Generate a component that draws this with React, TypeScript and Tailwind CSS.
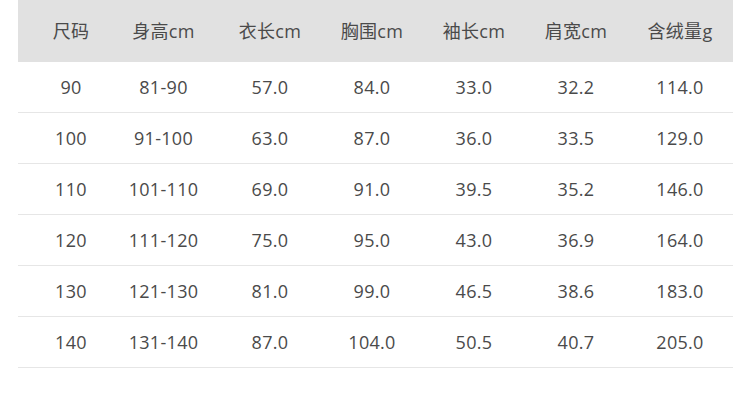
const HEADERS = ["尺码", "身高cm", "衣长cm", "胸围cm", "袖长cm", "肩宽cm", "含绒量g"];

const ROWS = [
  ["90", "81-90", "57.0", "84.0", "33.0", "32.2", "114.0"],
  ["100", "91-100", "63.0", "87.0", "36.0", "33.5", "129.0"],
  ["110", "101-110", "69.0", "91.0", "39.5", "35.2", "146.0"],
  ["120", "111-120", "75.0", "95.0", "43.0", "36.9", "164.0"],
  ["130", "121-130", "81.0", "99.0", "46.5", "38.6", "183.0"],
  ["140", "131-140", "87.0", "104.0", "50.5", "40.7", "205.0"],
];

// per-column nudges so text centres line up with the screenshot
const CELL = ["pl-[7px]", "pr-[7px]", "pl-[2px]", "", "", "", ""];

export default function App() {
  return (
    <div
      className="w-[750px] h-[409px] bg-white text-[#4a4a4a] text-[18px] tracking-[0.3px]"
      style={{ fontFamily: '"Open Sans", "Noto Sans CJK SC", sans-serif' }}
    >
      <div className="ml-[18px] w-[715px]">
        {/* ── Header ── */}
        <div className="grid grid-cols-[99px_100px_104px_102px_102px_102px_1fr] h-[62px] items-center bg-[#e1e1e1]">
          {HEADERS.map((h, i) => (
            <div key={h} className={`text-center ${CELL[i]}`}>{h}</div>
          ))}
        </div>

        {/* ── Rows ── */}
        {ROWS.map(row => (
          <div
            key={row[0]}
            className="grid grid-cols-[99px_100px_104px_102px_102px_102px_1fr] h-[51px] items-center border-b border-[#e6e6e6]"
          >
            {row.map((cell, i) => (
              <div key={i} className={`text-center ${CELL[i]}`}>{cell}</div>
            ))}
          </div>
        ))}
      </div>
    </div>
  );
}
